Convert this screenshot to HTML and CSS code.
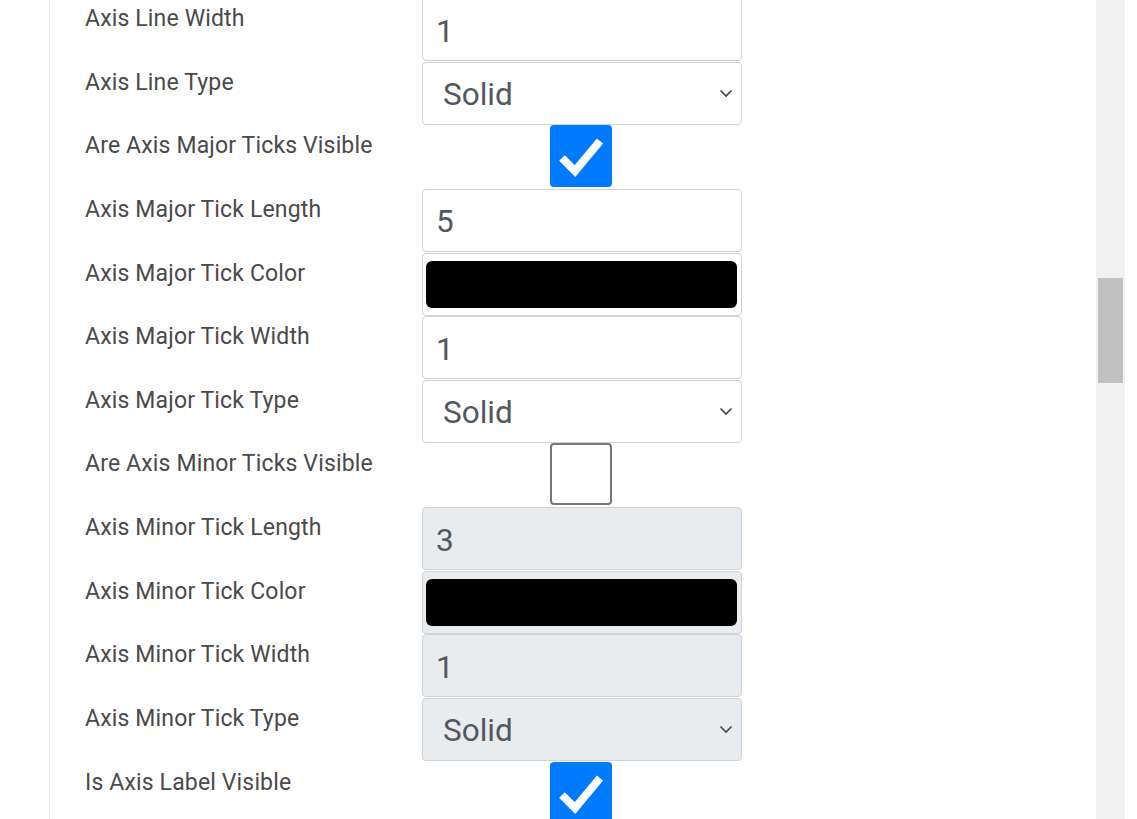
FILE: index.html
```html
<!DOCTYPE html>
<html lang="en">
<head>
    <meta charset="UTF-8">
    <meta name="viewport" content="width=device-width, initial-scale=1.0">
    <title>Axis Settings</title>
    <link rel="stylesheet" href="styles.css">
</head>
<body>
    <div class="page">
        <div class="content">
            <div class="card">
                <div class="row">
                    <div class="label">Axis Line Width</div>
                    <div class="field"><input class="form-control" type="text" value="1"></div>
                </div>
                <div class="row">
                    <div class="label">Axis Line Type</div>
                    <div class="field select-wrap">
                        <select class="form-control form-select"><option>Solid</option></select>
                        <svg class="chevron" viewBox="0 0 14 9"><polyline points="1.5,1.5 7,7 12.5,1.5"/></svg>
                    </div>
                </div>
                <div class="row">
                    <div class="label">Are Axis Major Ticks Visible</div>
                    <div class="field center">
                        <span class="check checked">
                            <svg viewBox="0 0 62 62"><polyline points="12,33 25,46 50,16"/></svg>
                        </span>
                    </div>
                </div>
                <div class="row">
                    <div class="label">Axis Major Tick Length</div>
                    <div class="field"><input class="form-control" type="text" value="5"></div>
                </div>
                <div class="row">
                    <div class="label">Axis Major Tick Color</div>
                    <div class="field"><div class="form-control color-box"><div class="swatch"></div></div></div>
                </div>
                <div class="row">
                    <div class="label">Axis Major Tick Width</div>
                    <div class="field"><input class="form-control" type="text" value="1"></div>
                </div>
                <div class="row">
                    <div class="label">Axis Major Tick Type</div>
                    <div class="field select-wrap">
                        <select class="form-control form-select"><option>Solid</option></select>
                        <svg class="chevron" viewBox="0 0 14 9"><polyline points="1.5,1.5 7,7 12.5,1.5"/></svg>
                    </div>
                </div>
                <div class="row">
                    <div class="label">Are Axis Minor Ticks Visible</div>
                    <div class="field center">
                        <span class="check"></span>
                    </div>
                </div>
                <div class="row">
                    <div class="label">Axis Minor Tick Length</div>
                    <div class="field"><input class="form-control" type="text" value="3" disabled></div>
                </div>
                <div class="row">
                    <div class="label">Axis Minor Tick Color</div>
                    <div class="field"><div class="form-control color-box disabled"><div class="swatch"></div></div></div>
                </div>
                <div class="row">
                    <div class="label">Axis Minor Tick Width</div>
                    <div class="field"><input class="form-control" type="text" value="1" disabled></div>
                </div>
                <div class="row">
                    <div class="label">Axis Minor Tick Type</div>
                    <div class="field select-wrap">
                        <select class="form-control form-select" disabled><option>Solid</option></select>
                        <svg class="chevron" viewBox="0 0 14 9"><polyline points="1.5,1.5 7,7 12.5,1.5"/></svg>
                    </div>
                </div>
                <div class="row">
                    <div class="label">Is Axis Label Visible</div>
                    <div class="field center">
                        <span class="check checked">
                            <svg viewBox="0 0 62 62"><polyline points="12,33 25,46 50,16"/></svg>
                        </span>
                    </div>
                </div>
            </div>
        </div>
        <div class="scrollbar"><div class="thumb"></div></div>
        <div class="gutter"></div>
    </div>
</body>
</html>
```

FILE: styles.css
```css
html, body {
    margin: 0;
    padding: 0;
    background: #fff;
}

body {
    font-family: Roboto, "Noto Sans", sans-serif;
    color: #4a4a4a;
}

.page {
    display: flex;
    height: 819px;
    overflow: hidden;
}

.content {
    flex: 1;
}

.card {
    margin-left: 49px;
    margin-top: -2px;
    padding-left: 35px;
    border-left: 1px solid #ebebeb;
    min-height: 840px;
}

.row {
    display: flex;
    height: 63.64px;
}

.label {
    width: 337px;
    padding-top: 4px;
    font-size: 23px;
    line-height: 33px;
    letter-spacing: 0.15px;
}

.field {
    width: 320px;
    position: relative;
}

.field.center {
    display: flex;
    justify-content: center;
    padding-right: 2px;
    box-sizing: border-box;
}

.form-control {
    box-sizing: border-box;
    display: block;
    width: 100%;
    height: 63px;
    margin: 0;
    padding: 3px 13px 0;
    font-family: Roboto, "Noto Sans", sans-serif;
    font-size: 31.5px;
    color: #52585e;
    background: #fff;
    border: 1px solid #ced4da;
    border-radius: 4px;
    outline: none;
}

.form-control:disabled,
.form-control.disabled {
    background: #e9ecef;
    opacity: 1;
}

.form-select {
    -webkit-appearance: none;
    appearance: none;
    padding-left: 20px;
}

.chevron {
    position: absolute;
    right: 9px;
    top: 27px;
    width: 14px;
    height: 9px;
    pointer-events: none;
}

.chevron polyline {
    fill: none;
    stroke: #444;
    stroke-width: 1.6;
}

.color-box {
    padding: 7px 4px 7px 3px;
}

.swatch {
    height: 100%;
    background: #000;
    border-radius: 6px;
}

.check {
    box-sizing: border-box;
    display: block;
    width: 62px;
    height: 62px;
    border: 2px solid #777;
    border-radius: 4px;
    background: #fff;
}

.check.checked {
    border: none;
    background: #007bff;
}

.check svg {
    display: block;
    width: 62px;
    height: 62px;
}

.check polyline {
    fill: none;
    stroke: #fff;
    stroke-width: 8;
}

.scrollbar {
    width: 29px;
    background: #f1f1f1;
}

.thumb {
    margin: 278px 2px 0;
    height: 105px;
    background: #c1c1c1;
}

.gutter {
    width: 12px;
}
```
